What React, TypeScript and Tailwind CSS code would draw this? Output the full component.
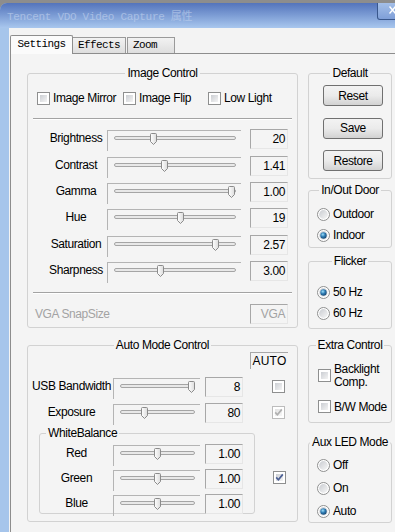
import React from "react";

const sans = "font-['Liberation_Sans',Arial,sans-serif]";
const mono = "font-['Liberation_Mono','Noto_Sans_CJK_SC',monospace]";

const Check = ({ checked, disabled }: { checked?: boolean; disabled?: boolean }) => (
  <span
    className={`relative block h-[13px] w-[13px] shrink-0 border bg-white p-[2px] ${
      disabled ? "border-[#bcbcbc]" : "border-[#8e8f8f]"
    }`}
  >
    <span
      className={`block h-full w-full bg-linear-to-br ${
        disabled ? "from-[#e2e2e2] to-[#f7f7f7]" : "from-[#cbced3] to-[#f4f4f4]"
      }`}
    />
    {checked && (
      <svg width="13" height="13" viewBox="0 0 13 13" className="absolute left-[-1px] top-[-1px]">
        <path
          d="M3.2 6.4 L5.4 8.8 L9.8 3.4"
          fill="none"
          stroke={disabled ? "#b0b0b0" : "#4b5f94"}
          strokeWidth="1.7"
        />
      </svg>
    )}
  </span>
);

const Radio = ({ on }: { on?: boolean }) => (
  <svg width="13" height="13" viewBox="0 0 13 13" className="shrink-0">
    <defs>
      <linearGradient id="radioFill" x1="0" y1="0" x2="1" y2="1">
        <stop offset="0" stopColor="#c9ccd1" />
        <stop offset="1" stopColor="#f7f7f7" />
      </linearGradient>
      <radialGradient id="radioDot" cx="0.4" cy="0.35" r="0.75">
        <stop offset="0" stopColor="#9fe0fa" />
        <stop offset="0.45" stopColor="#2f7db5" />
        <stop offset="1" stopColor="#103a63" />
      </radialGradient>
    </defs>
    <circle cx="6.5" cy="6.5" r="6" fill="#fff" stroke="#8e8f8f" />
    <circle cx="6.5" cy="6.5" r="4.4" fill="url(#radioFill)" />
    {on && <circle cx="6.5" cy="6.5" r="3.2" fill="url(#radioDot)" />}
  </svg>
);

const Slider = ({ w, pos }: { w: string; pos: number }) => (
  <div className={`relative mt-[5px] h-[21px] shrink-0 border-l border-t border-[#b4b4b4] pl-[6px] pr-[5px] pt-[5px] ${w}`}>
    <div className="h-[4px] rounded-full border border-[#a5a5a5] bg-[#e8e8e8]" />
    <svg width="7" height="12" viewBox="0 0 7 12" className="absolute top-[2px]" style={{ left: pos - 4.5 }}>
      <defs>
        <linearGradient id="thumbFill" x1="0" y1="0" x2="1" y2="0">
          <stop offset="0" stopColor="#ffffff" />
          <stop offset="1" stopColor="#dcdcdc" />
        </linearGradient>
      </defs>
      <path
        d="M0.5 1.5 Q0.5 0.5 1.5 0.5 H5.5 Q6.5 0.5 6.5 1.5 V8.5 L3.5 11.5 L0.5 8.5 Z"
        fill="url(#thumbFill)"
        stroke="#8b8b8b"
      />
    </svg>
  </div>
);

const Value = ({ v, muted }: { v: string; muted?: boolean }) => (
  <div
    className={`mt-[2px] flex h-[20px] w-[38px] shrink-0 items-center justify-end border border-b-[#e6e6e6] border-l-[#a7a7a7] border-r-[#e6e6e6] border-t-[#a7a7a7] pr-[2px] ${
      muted ? "text-[#a3a3a3]" : "text-black"
    }`}
  >
    {v}
  </div>
);

const Button = ({ label }: { label: string }) => (
  <div className="flex h-[21px] w-[60px] items-center justify-center rounded-[3px] border border-[#707070] bg-linear-to-b from-[#f3f3f3] via-[#ebebeb] to-[#d2d2d2]">
    {label}
  </div>
);

const imageRows: [string, number, string][] = [
  ["Brightness", 46, "20"],
  ["Contrast", 57, "1.41"],
  ["Gamma", 124, "1.00"],
  ["Hue", 73, "19"],
  ["Saturation", 108, "2.57"],
  ["Sharpness", 53, "3.00"],
];

const wbRows: [string, number, string][] = [
  ["Red", 44, "1.00"],
  ["Green", 44, "1.00"],
  ["Blue", 44, "1.00"],
];

const groupCls = "rounded-[3px] border border-[#d2d2d2]";
const legendCls = "mx-auto whitespace-nowrap px-[2px] leading-[14px]";

export default function App() {
  return (
    <div className={`h-[532px] w-[395px] overflow-hidden bg-[#8d8d8d] text-[12px] tracking-[-0.4px] text-black ${sans}`}>
      <div className="mt-[3px] flex h-[529px] flex-col overflow-hidden rounded-tl-[7px] bg-[#a6c5eb]">
        {/* Title bar */}
        <div className="flex h-[25px] shrink-0 bg-linear-to-b from-[#5474bb] to-[#a9c7ee]">
          <span className={`ml-[7px] mt-[6px] text-[11px] tracking-[-0.3px] text-[#c4d4ee] opacity-60 ${mono}`}>
            Tencent VDO Video Capture 属性
          </span>
          <div className="ml-auto mr-[-4px] flex h-[17px] w-[22px] items-start justify-end rounded-bl-[3px] border border-t-0 border-[#39578c] bg-linear-to-b from-[#a4bfe8] to-[#7f9fd8] pr-[2px] pt-[3px]">
            <svg width="7" height="8" viewBox="0 0 7 8">
              <path d="M0.5 0.5 L6.5 7.5 M6.5 0.5 L0.5 7.5" stroke="#fff" strokeWidth="1.4" />
            </svg>
          </div>
        </div>

        {/* Body */}
        <div className="flex flex-1">
          <div className="w-[9px] shrink-0" />
          <div className="flex flex-1 flex-col bg-[#f3f3f3] pl-[1px] pt-[7px]">
            {/* Tabs */}
            <div className={`flex h-[18px] items-end text-[11px] tracking-[-0.6px] ${mono}`}>
              <div className="relative z-10 -mb-px flex h-[19px] w-[63px] items-center justify-center rounded-t-[2px] border border-b-0 border-[#8d8d8d] bg-[#fbfbfb] pb-[2px]">
                Settings
              </div>
              <div className="flex h-[16px] w-[53px] items-center justify-center border-r border-t border-[#9a9a9a] bg-linear-to-b from-[#f2f2f2] to-[#dedede]">
                Effects
              </div>
              <div className="ml-px flex h-[16px] w-[48px] items-center justify-start border-l border-r border-t border-[#9a9a9a] bg-linear-to-b from-[#f2f2f2] to-[#dedede] pl-[5px]">
                Zoom
              </div>
            </div>

            {/* Tab panel */}
            <div className="flex flex-1 gap-[10px] border-l border-t border-[#8d8d8d] bg-[#f4f4f4] pl-[16px] pt-[12px]">
              {/* Left column */}
              <div className="flex w-[271px] shrink-0 flex-col">
                <fieldset className={`h-[262px] px-[5px] ${groupCls}`}>
                  <legend className={legendCls}>Image Control</legend>
                  <div className="mt-[10px] flex h-[16px] items-center">
                    <label className="ml-[4px] flex w-[86px] items-center gap-[3px]">
                      <Check /> Image Mirror
                    </label>
                    <label className="flex w-[85px] items-center gap-[3px]">
                      <Check /> Image Flip
                    </label>
                    <label className="flex items-center gap-[3px]">
                      <Check /> Low Light
                    </label>
                  </div>
                  <div className="mt-[12px] border-b border-t border-b-white border-t-[#a3a3a3]" />
                  <div className="mt-[5px] flex flex-col">
                    {imageRows.map(([label, pos, v]) => (
                      <div key={label} className="flex h-[26.4px] items-center">
                        <span className="w-[74px] shrink-0 pl-[12px] text-center">{label}</span>
                        <Slider w="w-[134px]" pos={pos} />
                        <div className="ml-[9px]">
                          <Value v={v} />
                        </div>
                      </div>
                    ))}
                  </div>
                  <div className="mt-[9px] border-b border-t border-b-white border-t-[#a3a3a3]" />
                  <div className="mt-[10px] flex h-[20px] items-center justify-between">
                    <span className="ml-[2px] text-[#a3a3a3]">VGA SnapSize</span>
                    <div className="-mt-[2px] mr-[4px]">
                      <Value v="VGA" muted />
                    </div>
                  </div>
                </fieldset>

                <fieldset className={`mt-[10px] h-[184px] px-[5px] ${groupCls}`}>
                  <legend className={legendCls}>Auto Mode Control</legend>
                  <div className="flex justify-end pr-[4px]">
                    <div className="flex h-[17px] w-[38px] items-center justify-center border-l border-t border-[#a7a7a7] tracking-[0.2px]">
                      AUTO
                    </div>
                  </div>
                  <div className="mt-[4px] flex h-[26px] items-center">
                    <span className="flex w-[80px] shrink-0 justify-center whitespace-nowrap pr-[3px]">USB Bandwidth</span>
                    <Slider w="w-[87px]" pos={78} />
                    <div className="ml-[5px]">
                      <Value v="8" />
                    </div>
                    <div className="ml-[29px]">
                      <Check />
                    </div>
                  </div>
                  <div className="flex h-[26px] items-center">
                    <span className="flex w-[80px] shrink-0 justify-center whitespace-nowrap pr-[3px]">Exposure</span>
                    <Slider w="w-[87px]" pos={31} />
                    <div className="ml-[5px]">
                      <Value v="80" />
                    </div>
                    <div className="ml-[29px]">
                      <Check checked disabled />
                    </div>
                  </div>
                  <div className="mt-px flex">
                    <fieldset className={`ml-[6px] h-[88px] w-[216px] ${groupCls}`}>
                      <legend className="ml-[6px] whitespace-nowrap px-[2px] leading-[14px]">WhiteBalance</legend>
                      {wbRows.map(([label, pos, v]) => (
                        <div key={label} className="flex h-[25px] items-center">
                          <span className="w-[73px] shrink-0 text-center">{label}</span>
                          <Slider w="w-[87px]" pos={pos} />
                          <div className="ml-[5px]">
                            <Value v={v} />
                          </div>
                        </div>
                      ))}
                    </fieldset>
                    <div className="ml-[18px] mt-[45px]">
                      <Check checked />
                    </div>
                  </div>
                </fieldset>
              </div>

              {/* Right column */}
              <div className="flex w-[84px] shrink-0 flex-col">
                <fieldset className={`h-[113px] ${groupCls}`}>
                  <legend className={legendCls}>Default</legend>
                  <div className="ml-[14px] flex flex-col gap-[11.5px] pt-[5px]">
                    <Button label="Reset" />
                    <Button label="Save" />
                    <Button label="Restore" />
                  </div>
                </fieldset>

                <fieldset className={`mt-[4px] h-[65px] ${groupCls}`}>
                  <legend className={legendCls}>In/Out Door</legend>
                  <div className="pl-[8px] pt-[6.5px]">
                    <div className="flex h-[21px] items-center gap-[3px]">
                      <Radio /> Outdoor
                    </div>
                    <div className="flex h-[21px] items-center gap-[3px]">
                      <Radio on /> Indoor
                    </div>
                  </div>
                </fieldset>

                <fieldset className={`mt-[6px] h-[75px] ${groupCls}`}>
                  <legend className={legendCls}>Flicker</legend>
                  <div className="pl-[8px] pt-[13.5px]">
                    <div className="flex h-[21px] items-center gap-[3px]">
                      <Radio on /> 50 Hz
                    </div>
                    <div className="flex h-[21px] items-center gap-[3px]">
                      <Radio /> 60 Hz
                    </div>
                  </div>
                </fieldset>

                <fieldset className={`mt-[9px] h-[85px] ${groupCls}`}>
                  <legend className={legendCls}>Extra Control</legend>
                  <div className="pl-[9px] pt-[10.5px]">
                    <div className="flex items-center gap-[3px]">
                      <Check />
                      <span className="leading-[13px]">
                        Backlight
                        <br />
                        Comp.
                      </span>
                    </div>
                    <div className="mt-[10px] flex h-[16px] items-center gap-[3px]">
                      <Check /> B/W Mode
                    </div>
                  </div>
                </fieldset>

                <fieldset className={`mt-[12px] h-[88px] ${groupCls}`}>
                  <legend className={legendCls}>Aux LED Mode</legend>
                  <div className="pl-[8px] pt-[4.5px]">
                    <div className="flex h-[23px] items-center gap-[3px]">
                      <Radio /> Off
                    </div>
                    <div className="flex h-[23px] items-center gap-[3px]">
                      <Radio /> On
                    </div>
                    <div className="flex h-[23px] items-center gap-[3px]">
                      <Radio on /> Auto
                    </div>
                  </div>
                </fieldset>
              </div>
            </div>
          </div>
        </div>
      </div>
    </div>
  );
}
